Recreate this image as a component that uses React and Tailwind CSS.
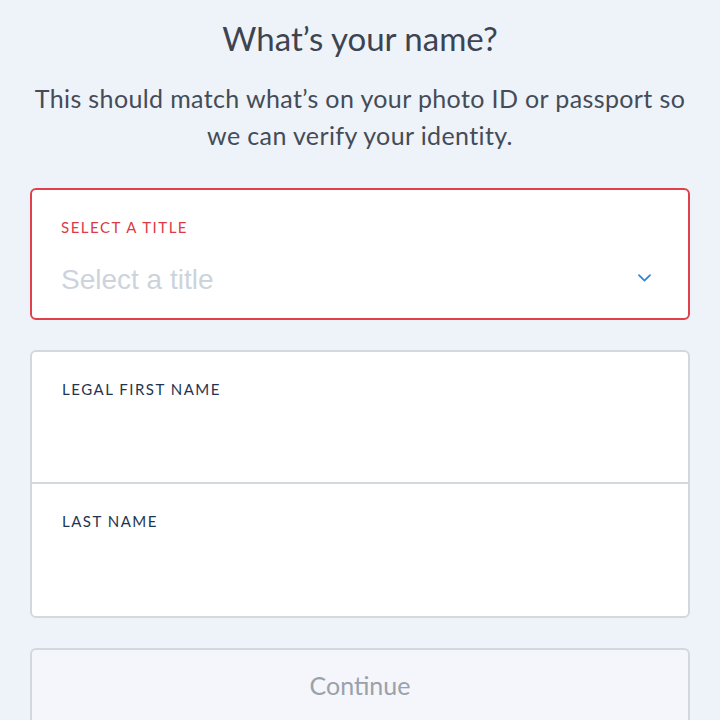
import React from 'react';

const Field = ({ label, border }) => (
  <div className={`h-[132px] px-[30px] pt-[27px] ${border ? 'border-b-2 border-[#d3d8df]' : ''}`}>
    <div className="text-[15px] tracking-[0.1em] text-[#1f3450] leading-[20px]">{label}</div>
  </div>
);

const App = () => {
  return (
    <div className="w-[720px] h-[720px] overflow-hidden bg-[#eef2f9] font-['Lato','Open_Sans',sans-serif]">
      <div className="pt-[18px] px-[30px] flex flex-col">
        <h1 className="text-center text-[33px] leading-[40px] text-[#3c4450]">What’s your name?</h1>
        <p className="mt-[22px] text-center text-[25px] leading-[37px] tracking-[0.015em] text-[#444c57]">
          This should match what’s on your photo ID or passport so
          <br />
          we can verify your identity.
        </p>

        {/* Title select */}
        <div className="mt-[34px] h-[132px] bg-white border-2 border-[#e0404c] rounded-[6px] px-[29px] pt-[27px]">
          <div className="text-[15px] tracking-[0.1em] text-[#dd3a46] leading-[20px]">SELECT A TITLE</div>
          <div className="mt-[25px] flex items-center justify-between">
            <span className="text-[28px] leading-[36px] text-[#cdd3dc] font-['Liberation_Sans',sans-serif]">Select a title</span>
            <svg className="w-[19px] h-[19px] mr-[5px] -mt-[6px]" viewBox="0 0 24 24" fill="none" stroke="#2f86d8" strokeWidth="2.2" strokeLinecap="round" strokeLinejoin="round">
              <path d="M5 9l7 7 7-7" />
            </svg>
          </div>
        </div>

        {/* Name fields */}
        <div className="mt-[30px] bg-white border-2 border-[#d3d8df] rounded-[6px] overflow-hidden">
          <Field label="LEGAL FIRST NAME" border />
          <Field label="LAST NAME" />
        </div>

        <button className="mt-[30px] h-[80px] w-full bg-[#f4f6fb] border-2 border-[#d3d8df] rounded-[6px] text-[25px] text-[#9aa1aa] pb-[4px]">
          Continue
        </button>
      </div>
    </div>
  );
};

export default App;
